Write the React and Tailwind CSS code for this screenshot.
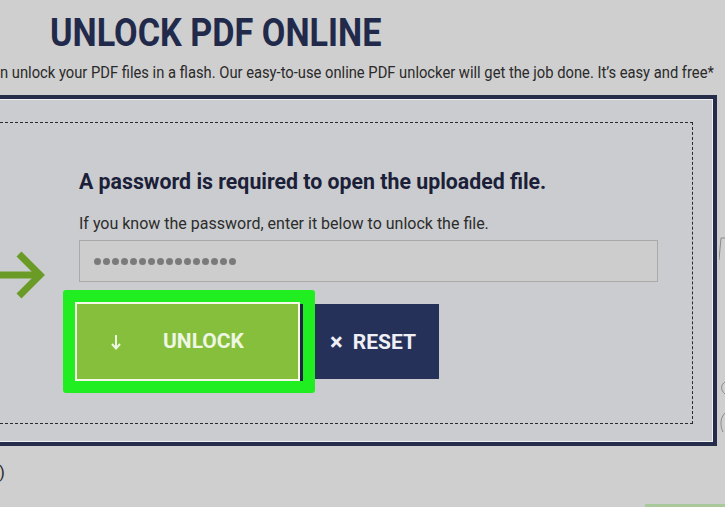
import React from "react";

const dots = Array.from({ length: 16 });

export default function App() {
  return (
    <div className="relative h-[507px] w-[725px] overflow-hidden bg-[#cfcfcf] font-['Roboto',_'Liberation_Sans',_sans-serif]">
      {/* header */}
      <div className="pl-[50px] pt-[14px]">
        <h1 className="w-max origin-left scale-x-90 whitespace-nowrap text-[38px] font-bold leading-none text-[#222a4b]">
          UNLOCK PDF ONLINE
        </h1>
      </div>
      <p className="mt-[12px] w-max origin-left scale-x-[0.867] whitespace-nowrap text-[17px] leading-none text-[#2a2a2a]">
        n unlock your PDF files in a flash. Our easy-to-use online PDF unlocker will get the job done. It’s easy and free*
      </p>

      {/* upload box */}
      <div className="-ml-[20px] mt-[14px] w-[737px] border-[4px] border-[#262d4b] bg-[#cacccf]">
        <div className="border border-[#eef0f3] pb-[17px] pr-[19px] pt-[22px]">
          <div className="border border-dashed border-[#2a2a2a] pb-[30px] pl-[93px] pt-[48px]">
            <h2 className="whitespace-nowrap text-[21.3px] font-bold leading-none text-[#1b2038]">
              A password is required to open the uploaded file.
            </h2>
            <p className="mt-[24px] text-[16px] leading-none text-[#2c2c2c]">
              If you know the password, enter it below to unlock the file.
            </p>
            <div className="mt-[8px] flex h-[42px] w-[579px] items-center gap-[2px] border border-[#a9a9a9] bg-[#cdcdcd] pl-[14px]">
              {dots.map((_, i) => (
                <span key={i} className="h-[7px] w-[7px] rounded-full bg-[#7a7a7a]" />
              ))}
            </div>

            <div className="-ml-[16px] mt-[8px] flex items-center">
              <div className="rounded-[3px] bg-[#20ee20] p-[12px]">
                <div className="flex h-[79px] items-stretch">
                  <button
                    type="button"
                    className="flex w-[225px] items-center border-2 border-[#f2f9e6] bg-[#86bf3b] pl-[34px] text-[21px] font-bold text-[#eef6e4]"
                  >
                    <svg width="10" height="16" viewBox="0 0 10 16" fill="none" stroke="#eef6e4" strokeWidth="2">
                      <path d="M5 1 V14" />
                      <path d="M1 10 L5 14.5 L9 10" />
                    </svg>
                    <span className="ml-[42px]">UNLOCK</span>
                  </button>
                  <div className="mt-[2px] w-[3px] bg-[#1d2444]" />
                </div>
              </div>
              <button
                type="button"
                className="flex h-[75px] w-[124px] items-center bg-[#263159] pl-[15px] text-[21px] font-bold text-[#eef0f5]"
              >
                <span className="text-[24px] leading-none">×</span>
                <span className="ml-[10px] mt-[2px]">RESET</span>
              </button>
            </div>
          </div>
        </div>
      </div>

      <p className="-ml-[1px] mt-[18px] text-[17px] leading-none text-[#2a2a2a]">)</p>

      <div className="mt-[23px] flex justify-end">
        <div className="h-[4px] w-[80px] bg-[#a9c99a]" />
      </div>

      {/* annotation arrow */}
      <svg className="absolute left-0 top-[250px]" width="48" height="50" viewBox="0 0 48 50">
        <path d="M0 25 H38" stroke="#6b9b27" strokeWidth="7" fill="none" />
        <path d="M19 4 L40 25 L19 46" stroke="#6b9b27" strokeWidth="7" fill="none" strokeLinejoin="miter" />
      </svg>

      {/* edge of page content behind the box */}
      <svg className="absolute right-0 top-[230px]" width="6" height="215" viewBox="0 0 6 215">
        <path d="M6 8 H2 L0 30" stroke="#8a8a8a" strokeWidth="1" fill="none" />
        <path d="M6 152 C2 154 1 160 6 164" stroke="#8a8a8a" strokeWidth="1" fill="none" />
        <path d="M6 183 C1 188 1 196 4 202" stroke="#8a8a8a" strokeWidth="1" fill="none" />
      </svg>
    </div>
  );
}
